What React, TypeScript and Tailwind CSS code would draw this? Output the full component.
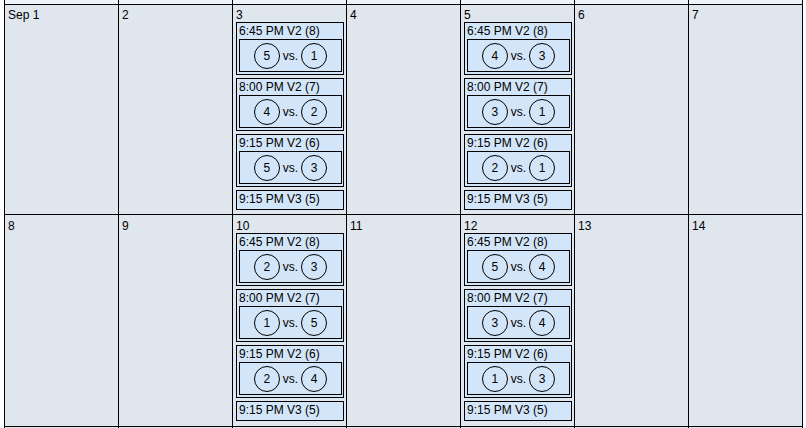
type Game = { time: string; home?: number; away?: number };

const weeks: { label: string; games?: Game[] }[][] = [
  [
    { label: "Sep 1" },
    { label: "2" },
    {
      label: "3",
      games: [
        { time: "6:45 PM V2 (8)", home: 5, away: 1 },
        { time: "8:00 PM V2 (7)", home: 4, away: 2 },
        { time: "9:15 PM V2 (6)", home: 5, away: 3 },
        { time: "9:15 PM V3 (5)" },
      ],
    },
    { label: "4" },
    {
      label: "5",
      games: [
        { time: "6:45 PM V2 (8)", home: 4, away: 3 },
        { time: "8:00 PM V2 (7)", home: 3, away: 1 },
        { time: "9:15 PM V2 (6)", home: 2, away: 1 },
        { time: "9:15 PM V3 (5)" },
      ],
    },
    { label: "6" },
    { label: "7" },
  ],
  [
    { label: "8" },
    { label: "9" },
    {
      label: "10",
      games: [
        { time: "6:45 PM V2 (8)", home: 2, away: 3 },
        { time: "8:00 PM V2 (7)", home: 1, away: 5 },
        { time: "9:15 PM V2 (6)", home: 2, away: 4 },
        { time: "9:15 PM V3 (5)" },
      ],
    },
    { label: "11" },
    {
      label: "12",
      games: [
        { time: "6:45 PM V2 (8)", home: 5, away: 4 },
        { time: "8:00 PM V2 (7)", home: 3, away: 4 },
        { time: "9:15 PM V2 (6)", home: 1, away: 3 },
        { time: "9:15 PM V3 (5)" },
      ],
    },
    { label: "13" },
    { label: "14" },
  ],
];

function Team({ n }: { n: number }) {
  return (
    <span className="flex h-[26px] w-[26px] items-center justify-center rounded-full border border-black">
      {n}
    </span>
  );
}

function GameBox({ game }: { game: Game }) {
  return (
    <div className="mb-[3px] border border-black bg-[#d3e5f8] pb-[2px] pl-[2px] pr-[1px]">
      <div className="h-[16px] leading-[16px]">{game.time}</div>
      {game.home !== undefined && (
        <div className="flex h-[33px] items-center justify-center gap-[3px] border border-black">
          <Team n={game.home} />
          <span>vs.</span>
          <Team n={game.away!} />
        </div>
      )}
    </div>
  );
}

export default function App() {
  return (
    <div
      className="h-[428px] w-[806px] overflow-hidden bg-white text-[12px] text-black"
      style={{ fontFamily: '"Liberation Sans", Arial, sans-serif' }}
    >
      <div className="ml-[4px] w-[799px] border-l border-black">
        <div className="flex h-[4px]">
          {Array.from({ length: 7 }).map((_, i) => (
            <div key={i} className="w-[114px] border-r border-black bg-[#eef3f9]" />
          ))}
        </div>
        {weeks.map((week, w) => (
          <div key={w} className={`flex border-t border-black ${w === 0 ? "h-[210px]" : "h-[212px]"}`}>
            {week.map((day) => (
              <div
                key={day.label}
                className={`w-[114px] shrink-0 border-r border-black bg-[#dfe6ee] pl-[3px] pr-[2px] ${w === 0 ? "pt-[3px]" : "pt-[4px]"}`}
              >
                <div className="h-[14px] leading-[14px]">{day.label}</div>
                {day.games?.map((g, i) => <GameBox key={i} game={g} />)}
              </div>
            ))}
          </div>
        ))}
        <div className="flex h-[20px] border-t border-black">
          {Array.from({ length: 7 }).map((_, i) => (
            <div key={i} className="w-[114px] border-r border-black bg-[#dfe6ee]" />
          ))}
        </div>
      </div>
    </div>
  );
}
